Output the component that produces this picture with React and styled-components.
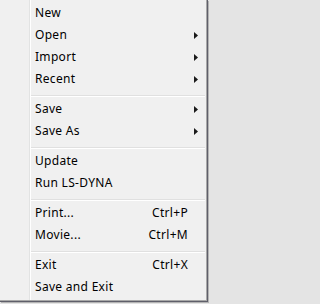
import React from "react";
import styled, { createGlobalStyle } from "styled-components";

const GlobalStyle = createGlobalStyle`
  html, body { margin: 0; padding: 0; background: #e4e4e4; }
  body { width: 210px; height: 304px; overflow: hidden; }
`;

const Menu = styled.div`
  box-sizing: border-box;
  width: 208px;
  padding: 2px 0 3px 0;
  background: linear-gradient(
    to right,
    #f0f0f0 0 29px,
    #e2e3e3 29px 30px,
    #ffffff 30px 31px,
    #f0f0f0 31px
  );
  border-right: 1px solid #5f5f6a;
  border-bottom: 1px solid #5f5f6a;
  box-shadow: inset -1px -1px 0 #a8a8a8, 1px 1px 0 #b4b4b4;
  font-family: "Noto Sans", "Open Sans", sans-serif;
  font-size: 12px;
  color: #000;
`;

const Item = styled.div`
  display: grid;
  grid-template-columns: 1fr auto 4px;
  column-gap: 6px;
  align-items: center;
  height: 22px;
  line-height: 22px;
  padding: 0 9px 0 35px;
  letter-spacing: 0.3px;
  white-space: nowrap;
`;

const Label = styled.span``;

const Shortcut = styled.span`
  text-align: right;
`;

const ArrowSlot = styled.span`
  display: flex;
  align-items: center;
  justify-content: flex-end;
  height: 22px;
`;

const Separator = styled.div`
  height: 8px;
  margin: 0 2px 0 31px;
  box-sizing: border-box;
  padding-top: 5px;
  &::before {
    content: "";
    display: block;
    height: 1px;
    background: #e0e0e0;
    border-bottom: 1px solid #ffffff;
  }
`;

const Arrow = () => (
  <svg width="4" height="7" viewBox="0 0 4 7">
    <polygon points="0,0 4,3.5 0,7" fill="#1a1a1a" />
  </svg>
);

const groups = [
  [
    { label: "New" },
    { label: "Open", sub: true },
    { label: "Import", sub: true },
    { label: "Recent", sub: true },
  ],
  [
    { label: "Save", sub: true },
    { label: "Save As", sub: true },
  ],
  [{ label: "Update" }, { label: "Run LS-DYNA" }],
  [
    { label: "Print...", key: "Ctrl+P" },
    { label: "Movie...", key: "Ctrl+M" },
  ],
  [{ label: "Exit", key: "Ctrl+X" }, { label: "Save and Exit" }],
];

export default function App() {
  return (
    <>
      <GlobalStyle />
      <Menu>
        {groups.map((g, gi) => (
          <React.Fragment key={gi}>
            {gi > 0 && <Separator />}
            {g.map((it) => (
              <Item key={it.label}>
                <Label>{it.label}</Label>
                <Shortcut>{it.key || ""}</Shortcut>
                <ArrowSlot>{it.sub && <Arrow />}</ArrowSlot>
              </Item>
            ))}
          </React.Fragment>
        ))}
      </Menu>
    </>
  );
}
